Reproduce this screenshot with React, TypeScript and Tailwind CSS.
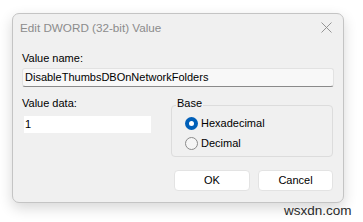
import React from "react";

export default function App() {
  const font = { fontFamily: '"Liberation Sans", Arial, sans-serif' };
  return (
    <div
      className="relative w-[363px] h-[222px] bg-white overflow-hidden pt-[13px] pl-[12px]"
      style={font}
    >
      <div className="w-[332px] h-[190px] rounded-[7px] border border-[#c4c4c4] bg-[#f0f0f0] shadow-[0_5px_14px_rgba(0,0,0,0.16)] flex flex-col">
        {/* Title bar */}
        <div className="h-[27px] flex items-center justify-between pl-[7px] pr-[11px]">
          <span className="text-[11.7px] text-[#8c8c8c] leading-none">Edit DWORD (32-bit) Value</span>
          <svg width="11" height="11" viewBox="0 0 11 11" className="block">
            <path d="M0.5 0.5 L10.5 10.5 M10.5 0.5 L0.5 10.5" stroke="#8a8a8a" strokeWidth="0.9" />
          </svg>
        </div>

        <div className="flex flex-col px-[9px]">
          <div className="mt-[10px] h-[14px] leading-[14px] text-[11px] text-black">Value name:</div>
          <div className="mt-[3px] h-[19px] w-full rounded-[3px] border border-[#e2e2e2] border-b-[#8a8a8a] bg-[#f8f8f8] flex items-center pl-[2px] text-[11px] text-black">
            DisableThumbsDBOnNetworkFolders
          </div>

          <div className="mt-[9px] flex">
            <div className="w-[149px] flex flex-col">
              <div className="h-[14px] leading-[14px] text-[11px] text-black">Value data:</div>
              <div className="mt-[6px] ml-[2px] h-[17px] w-[127px] bg-white flex items-center pl-[1px] text-[11px] text-black">
                1
              </div>
            </div>

            <div className="relative mt-[9px] w-[162px] h-[52px] rounded-[4px] border border-[#dcdcdc] flex flex-col pt-[7px] pl-[13px]">
              <span className="absolute left-[4px] -top-[10px] px-[1px] bg-[#f0f0f0] text-[11px] leading-[14px] text-black">
                Base
              </span>
              <div className="h-[20px] flex items-center gap-[3px]">
                <span className="w-[13px] h-[13px] rounded-full bg-[#005fb8] flex items-center justify-center">
                  <span className="w-[5px] h-[5px] rounded-full bg-white" />
                </span>
                <span className="text-[11px] text-black">Hexadecimal</span>
              </div>
              <div className="h-[20px] flex items-center gap-[3px]">
                <span className="w-[13px] h-[13px] rounded-full border border-[#8a8a8a] bg-[#f5f5f5]" />
                <span className="text-[11px] text-black">Decimal</span>
              </div>
            </div>
          </div>

          <div className="mt-[13px] flex justify-end gap-[8px] pr-[1px]">
            <div className="w-[76px] h-[21px] rounded-[4px] border border-[#e3e3e3] bg-white flex items-center justify-center text-[11px] text-black">
              OK
            </div>
            <div className="w-[75px] h-[21px] rounded-[4px] border border-[#e3e3e3] bg-white flex items-center justify-center text-[11px] text-black">
              Cancel
            </div>
          </div>
        </div>
      </div>

      <span className="absolute left-[284px] top-[203px] text-[13.5px] leading-[16px] text-[#2a2a2a]">
        wsxdn.com
      </span>
    </div>
  );
}
